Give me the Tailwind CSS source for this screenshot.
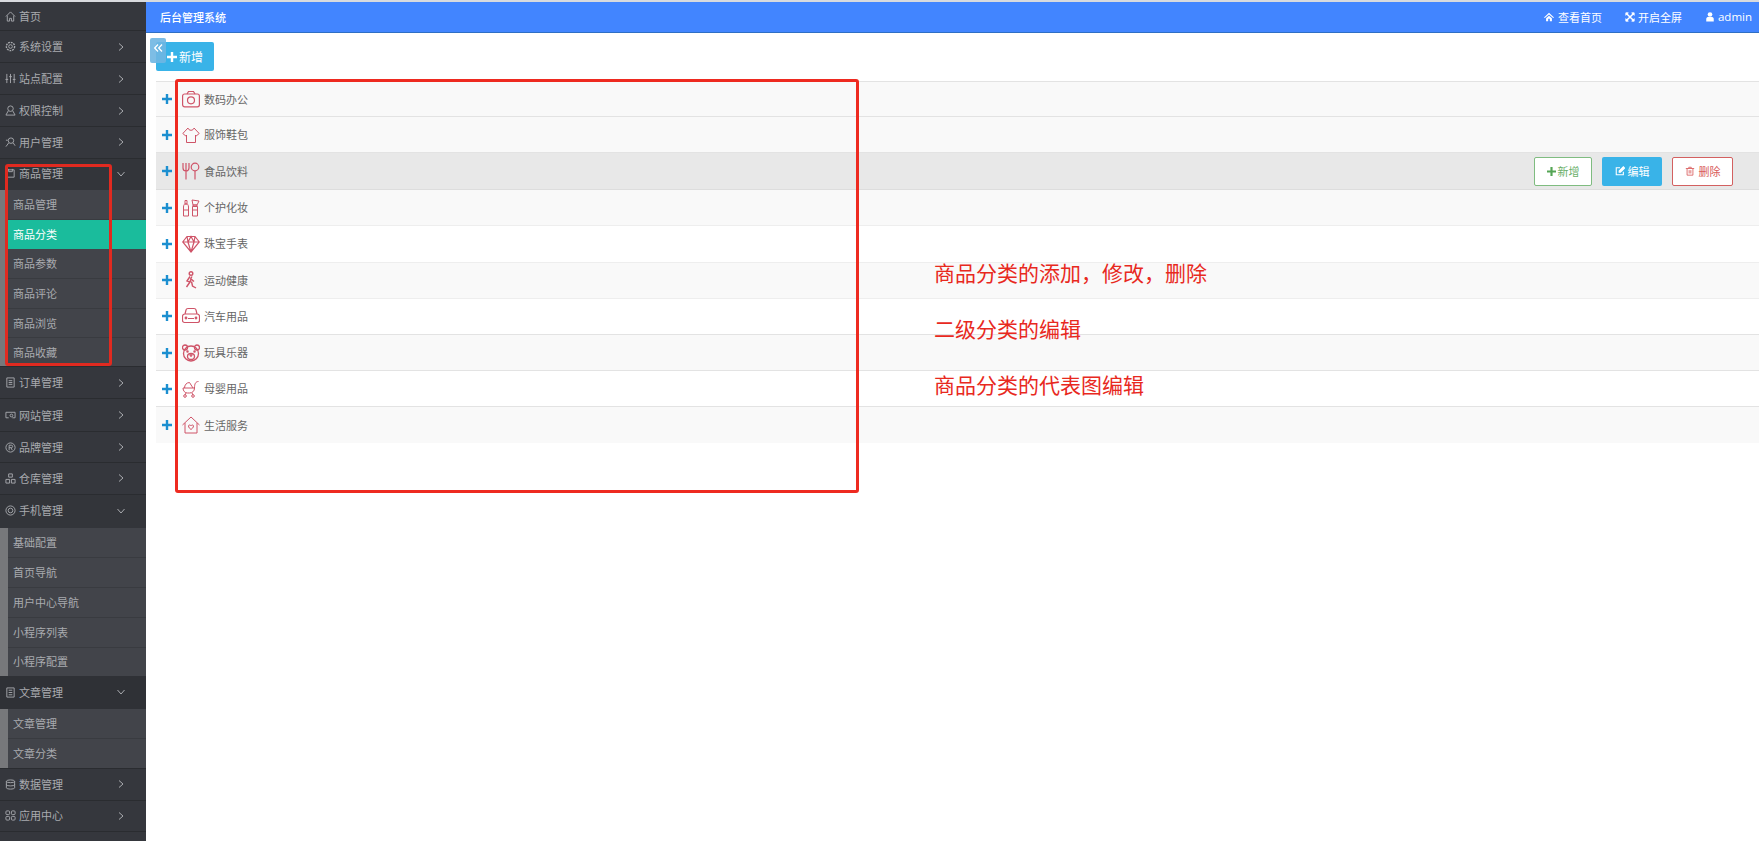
<!DOCTYPE html>
<html lang="zh-CN">
<head>
    <meta charset="UTF-8">
    <title>后台管理系统</title>
    <script src="https://cdn.jsdelivr.net/npm/@tailwindcss/browser@4"></script>
</head>
<body class="bg-white font-['Noto_Sans_CJK_SC','Liberation_Sans',sans-serif]">
<div class="relative h-[841px] overflow-hidden flex pt-[2px] bg-[#d8dade]">

    <!-- sidebar -->
    <aside class="w-[146px] shrink-0 bg-[#35373d] text-[11px] text-[#a9abaf] leading-none overflow-hidden">
        <div class="h-[29px] flex items-center pl-[5px] border-b border-[#2a2c30]">
            <svg class="w-[11px] h-[11px] mr-[3px]" viewBox="0 0 12 12" fill="none" stroke="#a9abaf"><path d="M1 6l5-5 5 5M2.500 5v6h2.500V8h2v3h2.500V5"/></svg>首页
        </div>
        <div class="h-[32px] flex items-center pl-[5px] border-b border-[#2a2c30]">
            <svg class="w-[11px] h-[11px] mr-[3px]" viewBox="0 0 12 12" fill="none" stroke="#a9abaf"><circle cx="6" cy="6" r="2"/><circle cx="6" cy="6" r="4.500" stroke-width="1.500" stroke-dasharray="2 1"/></svg>系统设置
            <svg class="w-[6px] h-[8px] ml-auto mr-[22px]" viewBox="0 0 6 8" fill="none" stroke="#a9abaf"><path d="M1 .5L5 4 1 7.500"/></svg>
        </div>
        <div class="h-[32px] flex items-center pl-[5px] border-b border-[#2a2c30]">
            <svg class="w-[11px] h-[11px] mr-[3px]" viewBox="0 0 12 12" fill="none" stroke="#a9abaf"><path d="M2 1v10M6 1v10M10 1v10M.5 7h3M4.500 4h3M8.500 7h3"/></svg>站点配置
            <svg class="w-[6px] h-[8px] ml-auto mr-[22px]" viewBox="0 0 6 8" fill="none" stroke="#a9abaf"><path d="M1 .5L5 4 1 7.500"/></svg>
        </div>
        <div class="h-[32px] flex items-center pl-[5px] border-b border-[#2a2c30]">
            <svg class="w-[11px] h-[11px] mr-[3px]" viewBox="0 0 12 12" fill="none" stroke="#a9abaf"><circle cx="6" cy="4" r="3"/><path d="M3.500 6.500L1 11h10L8.500 6.500"/></svg>权限控制
            <svg class="w-[6px] h-[8px] ml-auto mr-[22px]" viewBox="0 0 6 8" fill="none" stroke="#a9abaf"><path d="M1 .5L5 4 1 7.500"/></svg>
        </div>
        <div class="h-[31.500px] flex items-center pl-[5px] border-b border-[#2a2c30]">
            <svg class="w-[11px] h-[11px] mr-[3px]" viewBox="0 0 12 12" fill="none" stroke="#a9abaf"><circle cx="6.500" cy="4" r="3"/><path d="M1 10.500L4 6.500M9 6.500l2 3M1 3.500h2"/></svg>用户管理
            <svg class="w-[6px] h-[8px] ml-auto mr-[22px]" viewBox="0 0 6 8" fill="none" stroke="#a9abaf"><path d="M1 .5L5 4 1 7.500"/></svg>
        </div>
        <div class="h-[31.500px] flex items-center pl-[5px] pb-[1px] bg-[#33353a]">
            <svg class="w-[11px] h-[11px] mr-[3px]" viewBox="0 0 12 12" fill="none" stroke="#a9abaf"><path d="M2 2h8v8H2zM4 1v3h4V1"/></svg>商品管理
            <svg class="w-[8px] h-[6px] ml-auto mr-[21px]" viewBox="0 0 8 6" fill="none" stroke="#a9abaf"><path d="M.5 1L4 5l3.500-4"/></svg>
        </div>
        <div class="border-l-[8px] border-[#77787b] bg-[#42444a]">
            <div class="h-[29.700px] flex items-center pl-[5px] border-b border-[#393b40]">商品管理</div>
            <div class="h-[29.700px] flex items-center pl-[5px] bg-[#1abc9c] text-white">商品分类</div>
            <div class="h-[29.700px] flex items-center pl-[5px] border-b border-[#393b40]">商品参数</div>
            <div class="h-[29.700px] flex items-center pl-[5px] border-b border-[#393b40]">商品评论</div>
            <div class="h-[29.700px] flex items-center pl-[5px] border-b border-[#393b40]">商品浏览</div>
            <div class="h-[28px] flex items-center pl-[5px]">商品收藏</div>
        </div>
        <div class="h-[32.800px] flex items-center pl-[5px] border-y border-[#2a2c30]">
            <svg class="w-[11px] h-[11px] mr-[3px]" viewBox="0 0 12 12" fill="none" stroke="#a9abaf"><path d="M2 1h8v10H2zM4 4h4M4 6h4M4 8h4"/></svg>订单管理
            <svg class="w-[6px] h-[8px] ml-auto mr-[22px]" viewBox="0 0 6 8" fill="none" stroke="#a9abaf"><path d="M1 .5L5 4 1 7.500"/></svg>
        </div>
        <div class="h-[32.800px] flex items-center pl-[5px] border-b border-[#2a2c30]">
            <svg class="w-[11px] h-[11px] mr-[3px]" viewBox="0 0 12 12" fill="none" stroke="#a9abaf"><path d="M1 2.500h10v6H8M1 2.500v6h3"/><circle cx="7" cy="6" r="1.500"/></svg>网站管理
            <svg class="w-[6px] h-[8px] ml-auto mr-[22px]" viewBox="0 0 6 8" fill="none" stroke="#a9abaf"><path d="M1 .5L5 4 1 7.500"/></svg>
        </div>
        <div class="h-[31px] flex items-center pl-[5px] border-b border-[#2a2c30]">
            <svg class="w-[11px] h-[11px] mr-[3px]" viewBox="0 0 12 12" fill="none" stroke="#a9abaf"><circle cx="6" cy="6" r="5"/><path d="M4.500 9V3.500H7a1.300 1.300 0 010 2.700H4.500M6.500 6.200L8 9"/></svg>品牌管理
            <svg class="w-[6px] h-[8px] ml-auto mr-[22px]" viewBox="0 0 6 8" fill="none" stroke="#a9abaf"><path d="M1 .5L5 4 1 7.500"/></svg>
        </div>
        <div class="h-[31.800px] flex items-center pl-[5px] border-b border-[#2a2c30]">
            <svg class="w-[11px] h-[11px] mr-[3px]" viewBox="0 0 12 12" fill="none" stroke="#a9abaf"><path d="M4 1h4v3.500H4zM1 7h4v4H1zM7 7h4v4H7z"/></svg>仓库管理
            <svg class="w-[6px] h-[8px] ml-auto mr-[22px]" viewBox="0 0 6 8" fill="none" stroke="#a9abaf"><path d="M1 .5L5 4 1 7.500"/></svg>
        </div>
        <div class="h-[32.800px] flex items-center pl-[5px] pb-[1px] bg-[#33353a]">
            <svg class="w-[11px] h-[11px] mr-[3px]" viewBox="0 0 12 12" fill="none" stroke="#a9abaf"><circle cx="6" cy="6" r="5"/><circle cx="6" cy="6" r="2.500"/></svg>手机管理
            <svg class="w-[8px] h-[6px] ml-auto mr-[21px]" viewBox="0 0 8 6" fill="none" stroke="#a9abaf"><path d="M.5 1L4 5l3.500-4"/></svg>
        </div>
        <div class="border-l-[8px] border-[#77787b] bg-[#42444a]">
            <div class="h-[30px] flex items-center pl-[5px] border-b border-[#393b40]">基础配置</div>
            <div class="h-[30px] flex items-center pl-[5px] border-b border-[#393b40]">首页导航</div>
            <div class="h-[30px] flex items-center pl-[5px] border-b border-[#393b40]">用户中心导航</div>
            <div class="h-[30px] flex items-center pl-[5px] border-b border-[#393b40]">小程序列表</div>
            <div class="h-[28px] flex items-center pl-[5px]">小程序配置</div>
        </div>
        <div class="h-[33px] flex items-center pl-[5px] bg-[#2f3136]">
            <svg class="w-[11px] h-[11px] mr-[3px]" viewBox="0 0 12 12" fill="none" stroke="#a9abaf"><path d="M2 1h8v10H2z"/><path d="M4 3.500h4M4 6h4M4 8.500h4"/></svg>文章管理
            <svg class="w-[8px] h-[6px] ml-auto mr-[21px]" viewBox="0 0 8 6" fill="none" stroke="#a9abaf"><path d="M.5 1L4 5l3.500-4"/></svg>
        </div>
        <div class="border-l-[8px] border-[#77787b] bg-[#42444a]">
            <div class="h-[30px] flex items-center pl-[5px] border-b border-[#393b40]">文章管理</div>
            <div class="h-[29px] flex items-center pl-[5px]">文章分类</div>
        </div>
        <div class="h-[33px] flex items-center pl-[5px] border-y border-[#2a2c30]">
            <svg class="w-[11px] h-[11px] mr-[3px]" viewBox="0 0 12 12" fill="none" stroke="#a9abaf"><ellipse cx="6" cy="2.500" rx="4.500" ry="1.500"/><path d="M1.500 2.500v7c0 2 9 2 9 0v-7M1.500 6c0 2 9 2 9 0"/></svg>数据管理
            <svg class="w-[6px] h-[8px] ml-auto mr-[22px]" viewBox="0 0 6 8" fill="none" stroke="#a9abaf"><path d="M1 .5L5 4 1 7.500"/></svg>
        </div>
        <div class="h-[31.500px] flex items-center pl-[5px] border-b border-[#2a2c30]">
            <svg class="w-[11px] h-[11px] mr-[3px]" viewBox="0 0 12 12" fill="none" stroke="#a9abaf"><rect x="1" y="1" width="4" height="4" rx="1"/><rect x="7" y="1" width="4" height="4" rx="1"/><rect x="1" y="7" width="4" height="4" rx="1"/><rect x="7" y="7" width="4" height="4" rx="1"/></svg>应用中心
            <svg class="w-[6px] h-[8px] ml-auto mr-[22px]" viewBox="0 0 6 8" fill="none" stroke="#a9abaf"><path d="M1 .5L5 4 1 7.500"/></svg>
        </div>
        <div class="h-[31.500px] flex items-center pl-[5px]">
            <svg class="w-[11px] h-[11px] mr-[3px]" viewBox="0 0 12 12" fill="none" stroke="#a9abaf"><circle cx="6" cy="6" r="4"/></svg>工具
        </div>
    </aside>

    <!-- main -->
    <main class="flex-1 min-w-0 bg-white">
        <header class="h-[31px] bg-[#4285ff] border-b border-[#2f6fc4] flex items-center text-[11px] text-white leading-none pl-[14px] pr-[7px]">
            <span class="font-medium">后台管理系统</span>
            <span class="ml-auto flex items-center">
                <svg class="w-[10px] h-[10px] mr-[4px]" viewBox="0 0 12 12" fill="white"><path d="M6 1L0 6.500l1 .8L6 3l5 4.300 1-.8zM2.500 7.500V11h2.500V8h2v3h2.500V7.500L6 4.500z"/></svg>查看首页
            </span>
            <span class="ml-[23px] flex items-center">
                <svg class="w-[10px] h-[10px] mr-[3px]" viewBox="0 0 12 12" fill="white" stroke="white"><path d="M1 1h3L1 4zM11 1v3L8 1zM1 11V8l3 3zM11 11H8l3-3z"/><path d="M2 2l8 8M10 2l-8 8" stroke-width="1.800"/></svg>开启全屏
            </span>
            <span class="ml-[23px] flex items-center text-[11.500px] font-['Open_Sans','Liberation_Sans',sans-serif]">
                <svg class="w-[10px] h-[10px] mr-[3px]" viewBox="0 0 12 12" fill="white"><circle cx="6" cy="3" r="2.800"/><path d="M1.500 11.500V8.500c0-2 1.500-2.500 2.500-2.500h4c1 0 2.500.5 2.500 2.500v3z"/></svg>admin
            </span>
        </header>

        <div class="h-[48px] pl-[10px] pt-[9px]">
            <button class="w-[58px] h-[29px] rounded-[2px] bg-[#39b3e8] text-white text-[12px] leading-none flex items-center justify-center">
                <svg class="w-[10px] h-[10px] mr-[2px]" viewBox="0 0 10 10" fill="white"><path d="M3.800 0h2.400v3.800H10v2.400H6.200V10H3.800V6.200H0V3.800h3.800z"/></svg>新增
            </button>
        </div>

        <div class="ml-[10px] text-[11px] text-[#666] leading-none">
            <div class="h-[36.200px] flex items-center bg-[#f9f9f9] border-y border-[#e3e3e3]">
                <svg class="w-[10px] h-[10px] ml-[6px] mr-[10px]" viewBox="0 0 10 10" fill="#1c8fd0"><path d="M3.800 0h2.400v3.800H10v2.400H6.200V10H3.800V6.200H0V3.800h3.800z"/></svg>
                <svg class="w-[18px] h-[18px] mr-[4px]" viewBox="0 0 18 18" fill="none" stroke="#cf5468" stroke-width="1.200"><rect x=".6" y="4" width="16.800" height="12.800" rx="2"/><path d="M5 4l1.500-2.500h5L13 4"/><circle cx="9" cy="10.300" r="3.500"/></svg>数码办公
            </div>
            <div class="h-[36.200px] flex items-center bg-[#f9f9f9] border-b border-[#e3e3e3]">
                <svg class="w-[10px] h-[10px] ml-[6px] mr-[10px]" viewBox="0 0 10 10" fill="#1c8fd0"><path d="M3.800 0h2.400v3.800H10v2.400H6.200V10H3.800V6.200H0V3.800h3.800z"/></svg>
                <svg class="w-[18px] h-[18px] mr-[4px]" viewBox="0 0 18 18" fill="none" stroke="#cf5468"><path d="M6 2L.8 7.500l3 2.500L4.500 9v7.500h9V9l.7 1 3-2.500L12 2c-.5 3-5.500 3-6 0z"/></svg>服饰鞋包
            </div>
            <div class="h-[36.800px] flex items-center bg-[#e8e8e8] border-b border-[#dddddd] relative">
                <svg class="w-[10px] h-[10px] ml-[6px] mr-[10px]" viewBox="0 0 10 10" fill="#1c8fd0"><path d="M3.800 0h2.400v3.800H10v2.400H6.200V10H3.800V6.200H0V3.800h3.800z"/></svg>
                <svg class="w-[18px] h-[18px] mr-[4px]" viewBox="0 0 18 18" fill="none" stroke="#cf5468" stroke-width="1.200"><path d="M1 1v5c0 2 1.500 3 3 3s3-1 3-3V1M4 1v16.500"/><circle cx="13" cy="5" r="3.800"/><path d="M13 9v8.500"/></svg>食品饮料
                <div class="ml-auto mr-[26px] flex gap-[10px] text-[11px]">
                    <button class="w-[58px] h-[29px] rounded-[2px] bg-white border border-[#7fbc80] text-[#6aaf6a] flex items-center justify-center">
                        <svg class="w-[9px] h-[9px] mr-[2px]" viewBox="0 0 10 10" fill="#55a555"><path d="M3.800 0h2.400v3.800H10v2.400H6.200V10H3.800V6.200H0V3.800h3.800z"/></svg>新增
                    </button>
                    <button class="w-[60px] h-[29px] rounded-[2px] bg-[#39b3e8] text-white flex items-center justify-center">
                        <svg class="w-[10px] h-[10px] mr-[3px]" viewBox="0 0 12 12" fill="none" stroke="white" stroke-width="1.300"><path d="M10 7v3.500H1.500V2H6"/><path d="M5 7.500V6l5-5 1.500 1.500-5 5z" fill="white"/></svg>编辑
                    </button>
                    <button class="w-[61px] h-[29px] rounded-[2px] bg-white border border-[#d36060] text-[#d85a5a] flex items-center justify-center">
                        <svg class="w-[10px] h-[10px] mr-[4px]" viewBox="0 0 12 12" fill="none" stroke="#d85a5a"><path d="M1 3h10M4.500 3V1.500h3V3M2.500 3v8h7V3M5 5v4M7 5v4"/></svg>删除
                    </button>
                </div>
            </div>
            <div class="h-[36.200px] flex items-center bg-[#f9f9f9] border-b border-[#eeeeee]">
                <svg class="w-[10px] h-[10px] ml-[6px] mr-[10px]" viewBox="0 0 10 10" fill="#1c8fd0"><path d="M3.800 0h2.400v3.800H10v2.400H6.200V10H3.800V6.200H0V3.800h3.800z"/></svg>
                <svg class="w-[18px] h-[18px] mr-[4px]" viewBox="0 0 18 18" fill="none" stroke="#cf5468"><path d="M3 1.500h2v3.500H3zM1.500 8c0-2 1-3 1.500-3h2c.5 0 1.500 1 1.500 3v9h-5zM1.500 11h5"/><path d="M10 1l7 1-2 4h-4zM11 6h4v1.500h-4zM10.500 7.500h5V17h-5zM10.500 11h5"/></svg>个护化妆
            </div>
            <div class="h-[36.200px] flex items-center bg-white border-b border-[#eeeeee]">
                <svg class="w-[10px] h-[10px] ml-[6px] mr-[10px]" viewBox="0 0 10 10" fill="#1c8fd0"><path d="M3.800 0h2.400v3.800H10v2.400H6.200V10H3.800V6.200H0V3.800h3.800z"/></svg>
                <svg class="w-[18px] h-[18px] mr-[4px]" viewBox="0 0 18 18" fill="none" stroke="#cf5468" stroke-width="1.200"><path d="M5 1.500h8L17.300 7 9 17 .7 7zM.7 7h16.600M6 7l3 10 3-10M5 1.500L6 7l3-5.500L12 7l1-5.500"/></svg>珠宝手表
            </div>
            <div class="h-[36.200px] flex items-center bg-[#f9f9f9] border-b border-[#eeeeee]">
                <svg class="w-[10px] h-[10px] ml-[6px] mr-[10px]" viewBox="0 0 10 10" fill="#1c8fd0"><path d="M3.800 0h2.400v3.800H10v2.400H6.200V10H3.800V6.200H0V3.800h3.800z"/></svg>
                <svg class="w-[18px] h-[18px] mr-[4px]" viewBox="0 0 18 18" fill="none" stroke="#cf5468" stroke-width="1.400"><circle cx="9" cy="2.500" r="1.800"/><path d="M8 5.500l-3 4.500 3 1 1-3 3 2.500M8.500 8L10 5.500M8 11l-3.500 5M9.500 10.500l1 4.500 3.500 2"/></svg>运动健康
            </div>
            <div class="h-[36.200px] flex items-center bg-white border-b border-[#e3e3e3]">
                <svg class="w-[10px] h-[10px] ml-[6px] mr-[10px]" viewBox="0 0 10 10" fill="#1c8fd0"><path d="M3.800 0h2.400v3.800H10v2.400H6.200V10H3.800V6.200H0V3.800h3.800z"/></svg>
                <svg class="w-[18px] h-[18px] mr-[4px]" viewBox="0 0 18 18" fill="none" stroke="#cf5468" stroke-width="1.200"><path d="M3 7l1-4c.2-1 1-1.500 2-1.500h6c1 0 1.800.5 2 1.500l1 4M3 7h12c1.500 0 2.500 1 2.500 2.500v4c0 1-1 2-2 2h-13c-1 0-2-1-2-2v-4C.5 8 1.500 7 3 7zM6 11.500h6"/><circle cx="4" cy="11" r=".8"/><circle cx="14" cy="11" r=".8"/></svg>汽车用品
            </div>
            <div class="h-[36.200px] flex items-center bg-[#f9f9f9] border-b border-[#e3e3e3]">
                <svg class="w-[10px] h-[10px] ml-[6px] mr-[10px]" viewBox="0 0 10 10" fill="#1c8fd0"><path d="M3.800 0h2.400v3.800H10v2.400H6.200V10H3.800V6.200H0V3.800h3.800z"/></svg>
                <svg class="w-[18px] h-[18px] mr-[4px]" viewBox="0 0 18 18" fill="none" stroke="#cf5468" stroke-width="1.300"><circle cx="9" cy="9.500" r="7.500"/><circle cx="3" cy="3.500" r="2.500"/><circle cx="15" cy="3.500" r="2.500"/><ellipse cx="9" cy="12.500" rx="3.500" ry="3"/><path d="M7.500 11h3M9 11v2"/><circle cx="5.500" cy="7.500" r=".6"/><circle cx="12.500" cy="7.500" r=".6"/></svg>玩具乐器
            </div>
            <div class="h-[36.200px] flex items-center bg-white border-b border-[#e3e3e3]">
                <svg class="w-[10px] h-[10px] ml-[6px] mr-[10px]" viewBox="0 0 10 10" fill="#1c8fd0"><path d="M3.800 0h2.400v3.800H10v2.400H6.200V10H3.800V6.200H0V3.800h3.800z"/></svg>
                <svg class="w-[18px] h-[18px] mr-[4px]" viewBox="0 0 18 18" fill="none" stroke="#cf5468"><path d="M1 8h11.500c0 3-2 5-5 5h-2C3 13 1 11 1 8zM2.500 8c0-3 2-5.500 5-5.500L11 8M12.500 8c0-4 1-6.500 4-6.500M4 13l-1 2M10 13l1 2"/><circle cx="3" cy="16" r="1.300"/><circle cx="11" cy="16" r="1.300"/></svg>母婴用品
            </div>
            <div class="h-[35.500px] flex items-center bg-[#f9f9f9]">
                <svg class="w-[10px] h-[10px] ml-[6px] mr-[10px]" viewBox="0 0 10 10" fill="#1c8fd0"><path d="M3.800 0h2.400v3.800H10v2.400H6.200V10H3.800V6.200H0V3.800h3.800z"/></svg>
                <svg class="w-[18px] h-[18px] mr-[4px]" viewBox="0 0 18 18" fill="none" stroke="#cf5468"><path d="M.5 9L9 1l8.500 8M3 7v10h12V7"/><path d="M9 13.500c-3-2-3-4.500-1.500-4.500.7 0 1.500.7 1.500 1 0-.3.800-1 1.500-1 1.500 0 1.500 2.500-1.500 4.500z"/></svg>生活服务
            </div>
        </div>
    </main>

    <!-- collapse toggle, sits over the add button -->
    <div class="absolute left-[150px] top-[38px] w-[16px] h-[25px] rounded-[2px] bg-[#6fb6e2]/90 flex justify-center pt-[6px]">
        <svg class="w-[9px] h-[9px]" viewBox="0 0 9 9" fill="none" stroke="white" stroke-width="1.300"><path d="M4 .5L.7 4 4 7.500M8 .5L4.700 4 8 7.500"/></svg>
    </div>

    <!-- hand-drawn annotations on the screenshot -->
    <div class="absolute left-[5px] top-[164px] w-[107px] h-[202px] rounded-[3px] border-[3px] border-[#e12a20]"></div>
    <div class="absolute left-[175px] top-[79px] w-[684px] h-[414px] rounded-[3px] border-[3px] border-[#ee2a20]"></div>
    <p class="absolute left-[934px] top-[257px] text-[21px] leading-[30px] text-[#e8291e] whitespace-nowrap">商品分类的添加，修改，删除</p>
    <p class="absolute left-[934px] top-[313px] text-[21px] leading-[30px] text-[#e8291e] whitespace-nowrap">二级分类的编辑</p>
    <p class="absolute left-[934px] top-[369px] text-[21px] leading-[30px] text-[#e8291e] whitespace-nowrap">商品分类的代表图编辑</p>
</div>
</body>
</html>
